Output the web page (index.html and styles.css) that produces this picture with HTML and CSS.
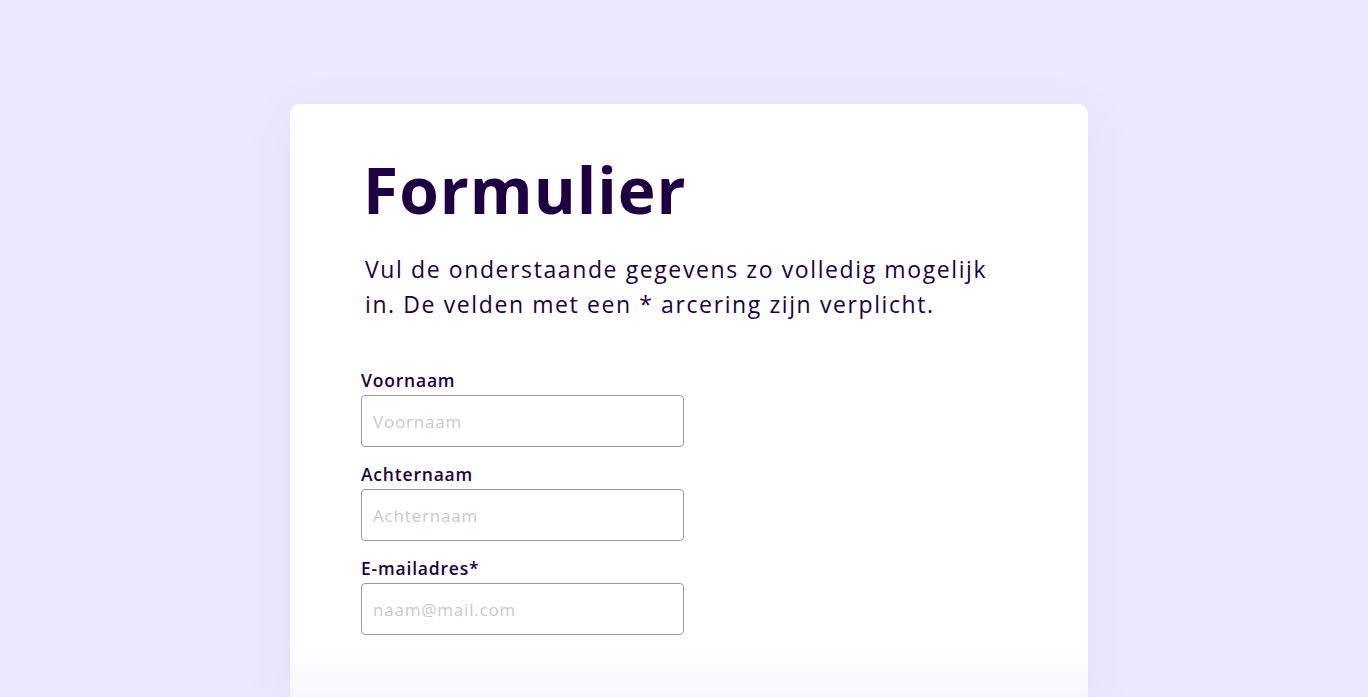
FILE: index.html
```html
<!DOCTYPE html>
<html lang="nl">
<head>
<meta charset="utf-8">
<title>Formulier</title>
<link rel="stylesheet" href="styles.css">
</head>
<body>
<main class="card">
  <h1 class="title">Formulier</h1>
  <p class="intro">Vul de onderstaande gegevens zo volledig mogelijk in. De velden met een * arcering zijn verplicht.</p>
  <form class="form">
    <div class="field">
      <label class="label" for="voornaam">Voornaam</label>
      <input class="input" id="voornaam" type="text" placeholder="Voornaam">
    </div>
    <div class="field">
      <label class="label" for="achternaam">Achternaam</label>
      <input class="input" id="achternaam" type="text" placeholder="Achternaam">
    </div>
    <div class="field">
      <label class="label" for="email">E-mailadres*</label>
      <input class="input" id="email" type="email" placeholder="naam@mail.com">
    </div>
  </form>
  <div class="fade"></div>
</main>
</body>
</html>
```
FILE: styles.css
```css
html, body {
  margin: 0;
  padding: 0;
  height: 100%;
  overflow: hidden;
}
body {
  background: #ebe9fe;
  font-family: "Open Sans", "DejaVu Sans", sans-serif;
  color: #1e0041;
}
.card {
  position: relative;
  box-sizing: border-box;
  width: 798px;
  height: 593px;
  margin: 104px 0 0 290px;
  padding: 46px 71px 0 71px;
  background: #ffffff;
  border-radius: 10px 10px 0 0;
  box-shadow: 0 10px 50px rgba(90, 70, 200, 0.07);
}
.title {
  margin: 0 0 0 2px;
  font-size: 64px;
  font-weight: 700;
  line-height: 80px;
  letter-spacing: 1px;
}
.intro {
  margin: 22px 0 0 4px;
  width: 650px;
  font-size: 23px;
  line-height: 35px;
  letter-spacing: 1.6px;
}
.form {
  margin-top: 46px;
  display: flex;
  flex-direction: column;
  gap: 15px;
}
.field {
  display: flex;
  flex-direction: column;
  gap: 3px;
}
.label {
  font-size: 17.5px;
  font-weight: 600;
  line-height: 24px;
  letter-spacing: 0.8px;
}
.input {
  box-sizing: border-box;
  width: 323px;
  height: 52px;
  padding: 0 11px;
  border: 1px solid #9a9a9a;
  border-radius: 4px;
  font-family: inherit;
  font-size: 17px;
  letter-spacing: 0.8px;
  color: #1e0041;
  background: #ffffff;
  outline: none;
}
.input::placeholder {
  color: #c9c9c9;
}
.fade {
  position: absolute;
  left: 0;
  right: 0;
  bottom: 0;
  height: 60px;
  background: linear-gradient(to bottom, rgba(248, 247, 255, 0), rgba(248, 247, 255, 1));
  pointer-events: none;
}
```
